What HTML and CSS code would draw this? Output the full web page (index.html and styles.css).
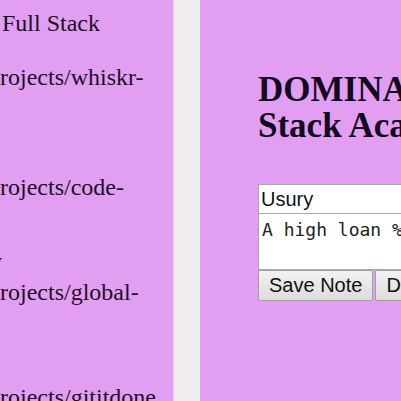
FILE: index.html
```html
<!DOCTYPE html>
<html>
<head>
<meta charset="utf-8">
<link rel="stylesheet" href="styles.css">
</head>
<body>
<div class="page">
  <aside class="side">
    <div class="line l1">Full Stack</div>
    <div class="line l2 cut">projects/whiskr-</div>
    <div class="line l3 cut">projects/code-</div>
    <div class="line l4 tail">y</div>
    <div class="line l5 cut">projects/global-</div>
    <div class="line l6 cut">projects/gititdone</div>
  </aside>
  <div class="gutter"></div>
  <main class="main">
    <h1 class="title">DOMINATE Full Stack Academy</h1>
    <form class="note">
      <input class="note-title" type="text" value="Usury">
      <textarea class="note-body">A high loan %</textarea>
      <div class="actions">
        <button type="button" class="btn">Save Note</button><button type="button" class="btn">Delete</button>
      </div>
    </form>
  </main>
</div>
</body>
</html>
```

FILE: styles.css
```css
html, body {
  margin: 0;
  padding: 0;
  overflow: hidden;
  background: #f0eef0;
}
.page {
  display: flex;
  width: 800px;
  height: 401px;
  background: #f0eef0;
}
.side {
  width: 173px;
  flex: none;
  background: #e29ef0;
  overflow: hidden;
  font-family: "Liberation Serif", serif;
  font-size: 24px;
  line-height: 27px;
  color: #1c1028;
  border-right: 1px solid #ecc6f4;
}
.line {
  white-space: nowrap;
}
.cut {
  margin-left: -12px;
}
.l1 { margin-top: 10px; margin-left: 2px; }
.l2 { margin-top: 27px; }
.l3 { margin-top: 83px; }
.l4 { margin-top: 46px; margin-left: -9px; font-size: 22px; }
.l5 { margin-top: 5px; }
.l6 { margin-top: 78px; }
.gutter {
  width: 25px;
  flex: none;
  border-right: 1px solid #f4e4f6;
}
.main {
  flex: 1;
  background: #e29ef0;
  padding: 72px 0 0 58px;
  overflow: hidden;
}
.title {
  margin: 0;
  width: 300px;
  font-family: "Liberation Serif", serif;
  font-weight: bold;
  font-size: 35px;
  line-height: 36px;
  color: #120a20;
}
.note {
  margin-top: 40px;
  width: 260px;
}
.note-title {
  display: block;
  box-sizing: border-box;
  width: 260px;
  height: 30px;
  margin: 0;
  padding: 0 2px;
  border: 1px solid #a9a9a9;
  background: #fff;
  font-family: "Liberation Sans", Arial, sans-serif;
  font-size: 20px;
  color: #111;
}
.note-body {
  display: block;
  box-sizing: border-box;
  width: 260px;
  height: 56px;
  margin: 0;
  padding: 5px 3px;
  border: 1px solid #a9a9a9;
  border-top: none;
  background: #fff;
  font-family: "DejaVu Sans Mono", monospace;
  font-size: 18px;
  line-height: 22px;
  color: #222;
  resize: none;
}
.actions {
  display: flex;
  gap: 2px;
}
.btn {
  box-sizing: border-box;
  height: 31px;
  margin: 0;
  padding: 0 10px;
  border: 1px solid #a0a0a0;
  border-radius: 2px;
  background: linear-gradient(#f2f2f2, #dcdcdc);
  font-family: "Liberation Sans", Arial, sans-serif;
  font-size: 20px;
  color: #111;
}
```
